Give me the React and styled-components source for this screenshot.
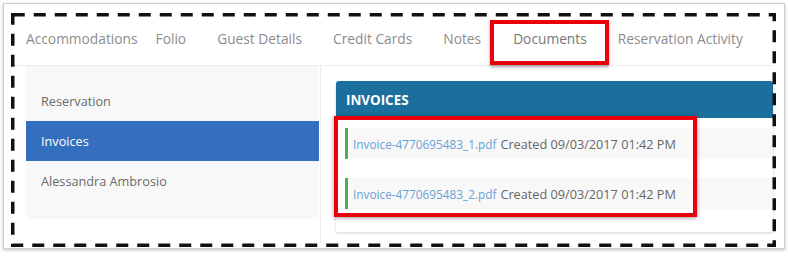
import React from "react";
import styled, { createGlobalStyle } from "styled-components";

const tabs = [
  { label: "Accommodations", gap: 18 },
  { label: "Folio", gap: 31 },
  { label: "Guest Details", gap: 31 },
  { label: "Credit Cards", gap: 31 },
  { label: "Notes", gap: 32 },
  { label: "Documents", gap: 31, active: true },
  { label: "Reservation Activity", gap: 0 },
];

const menu = [
  { label: "Reservation" },
  { label: "Invoices", active: true },
  { label: "Alessandra Ambrosio" },
];

const invoices = [
  { file: "Invoice-4770695483_1.pdf", created: "09/03/2017 01:42 PM" },
  { file: "Invoice-4770695483_2.pdf", created: "09/03/2017 01:42 PM" },
];

// the dashed outline is an annotation on top of the screenshot
const DashOutline = () => (
  <Outline width="765" height="234" viewBox="0 0 765 234">
    <rect
      x="1.75"
      y="1.75"
      width="761.5"
      height="230.5"
      fill="none"
      stroke="#111"
      strokeWidth="3.5"
      strokeDasharray="12 9"
    />
  </Outline>
);

const App = () => {
  return (
    <Frame>
      <GlobalStyle />
      <Dashed>
        <TabBar>
          {tabs.map((t) => (
            <Tab key={t.label} $gap={t.gap} $active={t.active}>
              {t.label}
              {t.active && <TabMark />}
            </Tab>
          ))}
        </TabBar>
        <Body>
          <Sidebar>
            {menu.map((m) => (
              <MenuItem key={m.label} $active={m.active}>
                {m.label}
              </MenuItem>
            ))}
          </Sidebar>
          <Main>
            <Panel>
              <PanelHead>INVOICES</PanelHead>
              <List>
                {invoices.map((inv) => (
                  <Row key={inv.file}>
                    <FileLink href="#">{inv.file}</FileLink>
                    <Created>Created {inv.created}</Created>
                  </Row>
                ))}
                <ListMark />
              </List>
            </Panel>
          </Main>
        </Body>
        <DashOutline />
      </Dashed>
    </Frame>
  );
};

export default App;

const GlobalStyle = createGlobalStyle`
  body {
    margin: 0;
    background: #ffffff;
    font-family: "Open Sans", "Liberation Sans", sans-serif;
  }
`;
const Frame = styled.div`
  margin: 3px;
  width: 782px;
  height: 246px;
  border: 1px solid #cfcfcf;
  box-shadow: 0 1px 3px rgba(0, 0, 0, 0.25);
  background: #fff;
  padding: 9px 0 0 7px;
  box-sizing: border-box;
`;
const Dashed = styled.div`
  position: relative;
  width: 765px;
  height: 234px;
  box-sizing: border-box;
  padding: 3px 3px 3px 15px;
  overflow: hidden;
  display: flex;
  flex-direction: column;
`;
const Outline = styled.svg`
  position: absolute;
  left: 0;
  top: 0;
  pointer-events: none;
`;
const TabBar = styled.div`
  display: flex;
  align-items: center;
  height: 50px;
  border-bottom: 1px solid #ececec;
  margin-left: -12px;
  padding-left: 12px;
  padding-bottom: 5px;
  box-sizing: border-box;
`;
const Tab = styled.div`
  position: relative;
  font-size: 13.75px;
  color: ${(p) => (p.$active ? "#777" : "#8c8c8c")};
  margin-right: ${(p) => p.$gap}px;
  white-space: nowrap;
`;
const TabMark = styled.div`
  position: absolute;
  left: -23px;
  right: -22px;
  top: -9px;
  height: 45px;
  box-sizing: border-box;
  border: 4px solid #e8000a;
  box-shadow: 0 2px 3px rgba(0, 0, 0, 0.35);
`;
const Body = styled.div`
  flex: 1;
  display: flex;
`;
const Sidebar = styled.div`
  width: 294px;
  height: 153px;
  background: #f8f8f8;
  padding-top: 15px;
  box-sizing: border-box;
  border-right: 1px solid #fff;
`;
const MenuItem = styled.div`
  height: 40px;
  display: flex;
  align-items: center;
  padding-left: 15px;
  font-size: 12.7px;
  color: ${(p) => (p.$active ? "#fff" : "#6a6a6a")};
  background: ${(p) => (p.$active ? "#336fbe" : "transparent")};
`;
const Main = styled.div`
  flex: 1;
  border-left: 1px solid #ececec;
  padding: 15px 0 0 15px;
`;
const Panel = styled.div`
  background: #fff;
  box-shadow: 0 1px 3px rgba(0, 0, 0, 0.18);
  border-radius: 3px 3px 0 0;
  height: 151px;
`;
const PanelHead = styled.div`
  height: 37px;
  background: #1a6f9c;
  border-radius: 3px 3px 0 0;
  color: #fff;
  font-weight: 700;
  font-size: 13.4px;
  display: flex;
  align-items: center;
  padding-left: 10px;
`;
const List = styled.div`
  position: relative;
  padding-top: 10px;
`;
const Row = styled.div`
  height: 31px;
  margin-bottom: 19px;
  margin-left: 9px;
  background: #f8f8f8;
  border-left: 3px solid #4caf50;
  display: flex;
  align-items: center;
  padding-left: 5px;
  white-space: nowrap;
`;
const FileLink = styled.a`
  color: #6aa1d6;
  font-size: 11.8px;
  text-decoration: none;
  margin-right: 4px;
`;
const Created = styled.span`
  color: #666;
  font-size: 12.7px;
`;
const ListMark = styled.div`
  position: absolute;
  left: -2px;
  top: -2px;
  width: 363px;
  height: 101px;
  box-sizing: border-box;
  border: 4px solid #e8000a;
  box-shadow: 0 1px 4px rgba(0, 0, 0, 0.4);
`;
